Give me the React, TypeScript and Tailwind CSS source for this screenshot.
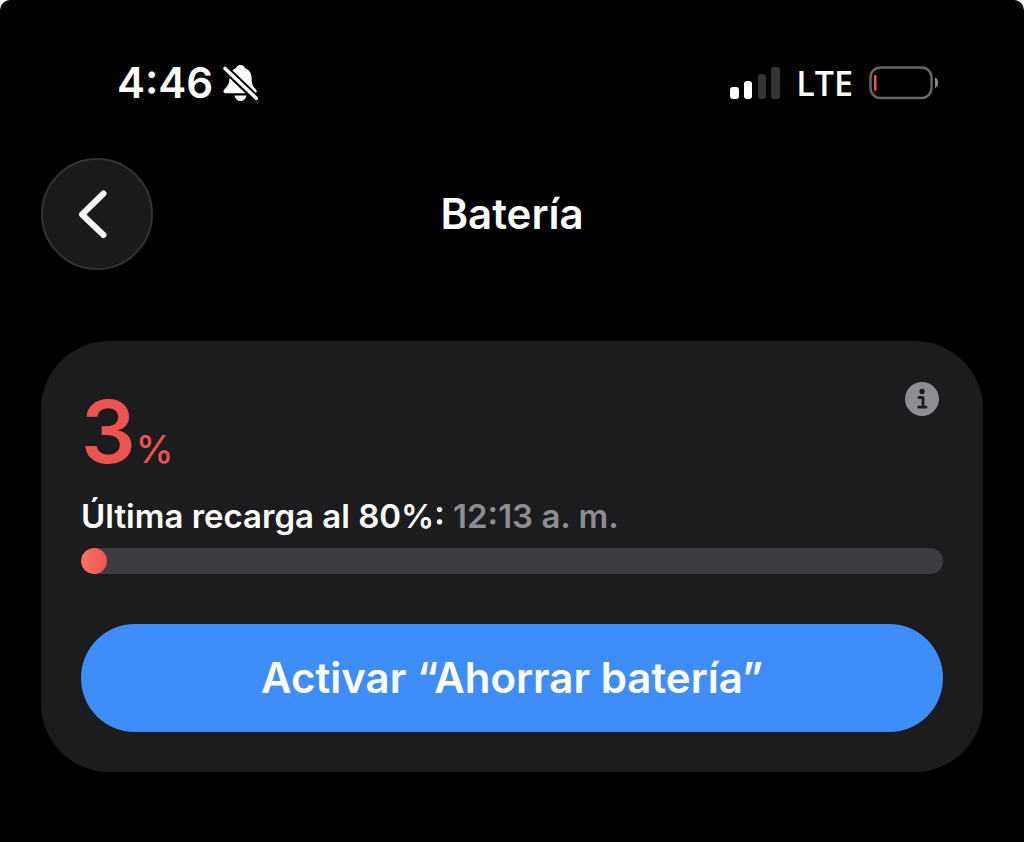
import React, { useState } from 'react';

const BATTERY_LEVEL = 3;

const SilentIcon: React.FC = () => (
  <svg width="36" height="38" viewBox="0 0 36 38" fill="none" aria-label="Silencio">
    <path
      d="M17.5 1c-2.2 0-3.8 1.2-4.4 3C8.6 5.9 6.4 9.2 6.4 14c0 6-1.8 8.2-4.800 11-1.800 1.700-1.400 4.300 1 4.300h29c2.400 0 2.800-2.600 1-4.300-3-2.800-4-5-4-11 0-4.800-2.200-8.100-6.700-10-.6-1.800-2.200-3-4.400-3z"
      fill="#fff"
    />
    <path d="M11.5 31.500h12c-.7 3.500-2.900 5.500-6 5.500s-5.300-2-6-5.500z" fill="#fff" />
    <path d="M-1 1.500 37 38" stroke="#000" strokeWidth="7.500" />
    <path d="M2 4.400 33.500 34.400" stroke="#fff" strokeWidth="3.400" strokeLinecap="round" />
  </svg>
);

const SignalIcon: React.FC = () => (
  <svg width="50" height="33" viewBox="0 0 50 33" aria-label="Señal">
    <rect x="0" y="20" width="9" height="12" rx="3" fill="#fff" />
    <rect x="14" y="14" width="8" height="18" rx="3" fill="#fff" />
    <rect x="28" y="7" width="8" height="25" rx="3" fill="#333" />
    <rect x="41" y="0" width="9" height="32" rx="3" fill="#333" />
  </svg>
);

const BatteryIcon: React.FC = () => (
  <svg width="70" height="34" viewBox="0 0 70 34" aria-label="Nivel de batería">
    <rect x="1.500" y="1.500" width="61" height="30.500" rx="10" fill="none" stroke="#666" strokeWidth="2.400" />
    <rect x="5" y="9" width="2.500" height="16" rx="1" fill="#ec544f" />
    <path d="M66 11.500c4.200 1.500 4.200 9 0 10.500z" fill="#8a8a8a" />
  </svg>
);

const BackIcon: React.FC = () => (
  <svg width="30" height="50" viewBox="0 0 30 50" fill="none">
    <path d="M25.500 4.500 4 25.500 25.500 46" stroke="#f5f5f5" strokeWidth="6" strokeLinecap="round" strokeLinejoin="round" />
  </svg>
);

const InfoIcon: React.FC = () => (
  <svg width="34" height="34" viewBox="0 0 34 34" fill="none">
    <circle cx="17" cy="17" r="17" fill="#8e8d93" />
    <circle cx="17" cy="9.500" r="2.700" fill="#1c1c1e" />
    <path d="M14 15.500h4V25M13.700 25.200h7.300" stroke="#1c1c1e" strokeWidth="2.800" strokeLinecap="round" strokeLinejoin="round" />
  </svg>
);

const StatusBar: React.FC = () => (
  <div className="flex h-[50px] items-center justify-between pl-[117px] pr-[85px]">
    <div className="flex items-center gap-2.5">
      <span className="text-[42px] font-semibold leading-none">4:46</span>
      <SilentIcon />
    </div>
    <div className="flex items-center">
      <SignalIcon />
      <span className="mx-4 font-['Open_Sans','Liberation_Sans',sans-serif] text-[34px] font-semibold leading-none">
        LTE
      </span>
      <BatteryIcon />
    </div>
  </div>
);

const App: React.FC = () => {
  const [saving, setSaving] = useState(false);

  return (
    <div className="bg-white font-['Inter','Liberation_Sans',sans-serif] text-white">
      <div className="min-h-screen rounded-t-[10px] bg-black pt-[58px] pb-16">
        <StatusBar />

        {/* Navigation */}
        <header className="mt-[50px] grid grid-cols-[112px_1fr_112px] items-center px-[41px]">
          <button
            type="button"
            aria-label="Atrás"
            className="flex h-28 w-28 items-center justify-center rounded-full border-2 border-[#333] bg-[#1a1a1a] pr-2"
          >
            <BackIcon />
          </button>
          <h1 className="text-center text-[42px] font-semibold leading-none">Batería</h1>
        </header>

        {/* Battery card */}
        <main className="mx-[41px] mt-[71px] rounded-[68px] bg-[#1c1c1e] px-10 pt-10 pb-10">
          <div className="flex items-start justify-between">
            <p className="flex items-baseline pt-2 text-[#ed544f]">
              <span className="text-[86px] font-semibold leading-[86px]">{BATTERY_LEVEL}</span>
              <span className="text-[38px] font-medium leading-none">%</span>
            </p>
            <button type="button" aria-label="Información" className="mr-1 mt-px">
              <InfoIcon />
            </button>
          </div>

          <p className="mt-5 text-[33px] font-semibold leading-[42px]">
            Última recarga al 80%: <span className="text-[#8e8d93]">12:13 a. m.</span>
          </p>

          <div className="mt-[11px] h-[26px] overflow-hidden rounded-full bg-[#3d3c41]">
            <div
              className="h-full min-w-[26px] rounded-full bg-linear-to-r from-[#f57566] to-[#ec544f]"
              style={{ width: `${BATTERY_LEVEL}%` }}
            />
          </div>

          <button
            type="button"
            aria-pressed={saving}
            onClick={() => setSaving(!saving)}
            className="mt-[50px] flex h-[108px] w-full items-center justify-center rounded-full bg-[#3f8df8] text-[42px] font-semibold leading-none"
          >
            Activar “Ahorrar batería”
          </button>
        </main>
      </div>
    </div>
  );
};

export default App;
